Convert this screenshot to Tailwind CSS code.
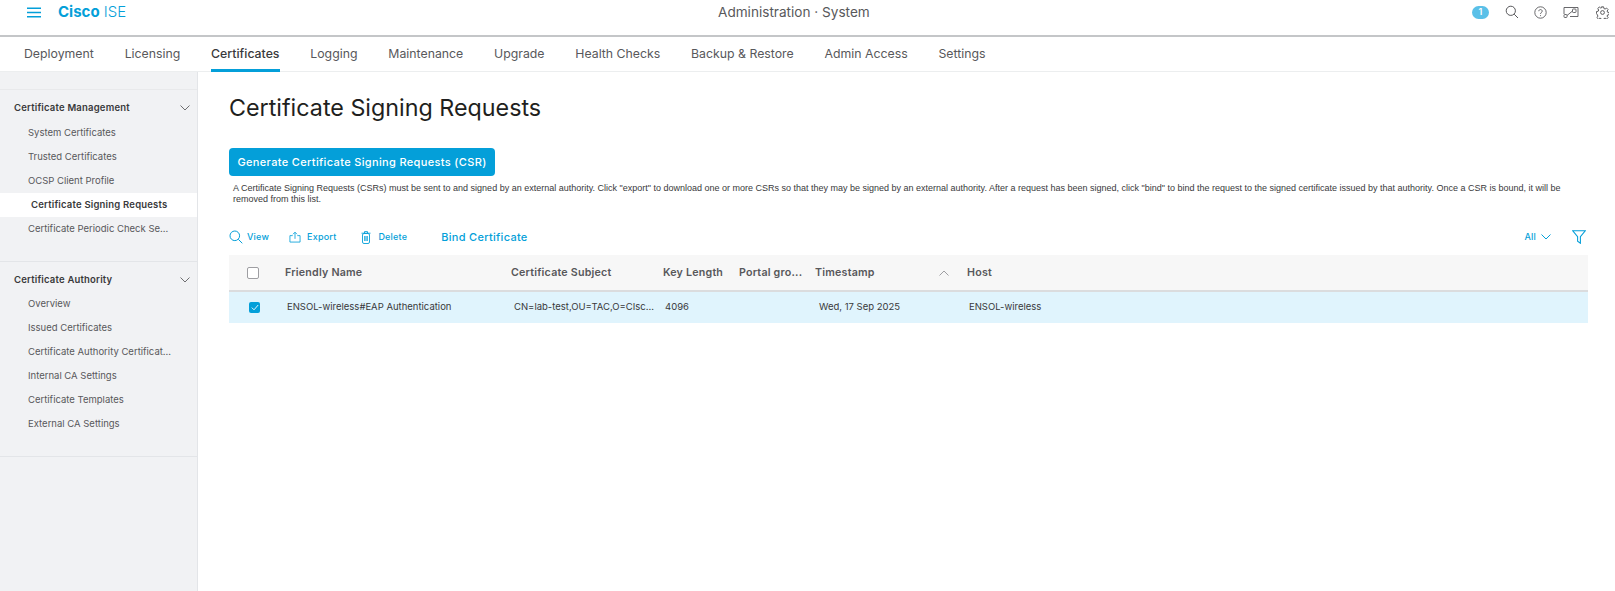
<!DOCTYPE html>
<html lang="en">
  <head>
    <meta charset="UTF-8" />
    <title>Certificate Signing Requests</title>
    <script src="https://cdn.jsdelivr.net/npm/@tailwindcss/browser@4"></script>
  </head>
  <body class="bg-white font-['Inter',sans-serif] text-[#39393b] h-[591px] w-[1615px] overflow-hidden">
    <!-- top bar -->
    <header class="h-[37px] flex items-start border-b-2 border-[#c4c6c8] relative">
      <button class="ml-[26px] mt-[7px] w-[16px]">
        <svg width="16" height="11" viewBox="0 0 16 11" stroke="#049fd9" stroke-width="1.6" fill="none"><path d="M1 1.2h14M1 5.5h14M1 9.8h14" /></svg>
      </button>
      <div class="ml-[16px] mt-[3px] text-[15px] leading-[18px] text-[#049fd9]"><span class="font-bold">Cisco</span> <span class="font-light">ISE</span></div>
      <div class="absolute left-[718px] top-[3px] text-[13.6px] leading-[18px] text-[#58585b]">Administration · System</div>
      <div class="ml-auto flex items-center h-[24px] text-[#58585b]">
        <span class="w-[17px] h-[13px] rounded-full bg-[#5ac0e8] text-white text-[9px] font-semibold flex items-center justify-center">1</span>
        <svg class="ml-[16px]" width="14" height="14" viewBox="0 0 14 14" fill="none" stroke="#58585b" stroke-width="1"><circle cx="5.8" cy="5.8" r="4.6" /><path d="M9.2 9.2L13 13" /></svg>
        <svg class="ml-[15px]" width="13" height="13" viewBox="0 0 13 13" fill="none" stroke="#58585b" stroke-width="0.9"><circle cx="6.5" cy="6.5" r="5.7" /><path d="M4.8 5.2c0-2.2 3.4-2.2 3.4 0 0 1.3-1.7 1.3-1.7 2.8M6.5 9.2v.9" /></svg>
        <svg class="ml-[16px]" width="16" height="12" viewBox="0 0 16 12" fill="none" stroke="#58585b" stroke-width="0.9"><path d="M1 8V1.5h14v9H7" /><rect x="1" y="8.5" width="3" height="3" rx="0.8" /><rect x="9.5" y="3" width="3.5" height="3.5" rx="0.8" /><path d="M4 9.5L9.5 5" /></svg>
        <svg class="ml-[17px] mr-[6px]" width="13" height="13" viewBox="0 0 24 24" fill="none" stroke="#58585b" stroke-width="1.8"><circle cx="12" cy="12" r="3.5" /><path d="M10 1.5h4l.6 3.2 2.2.9 2.7-1.8 2.8 2.8-1.8 2.7.9 2.2 3.1.6v3.8l-3.1.6-.9 2.2 1.8 2.7-2.8 2.8-2.7-1.8-2.2.9-.6 2.6h-4l-.6-2.6-2.2-.9-2.7 1.8-2.8-2.8 1.8-2.7-.9-2.2L1 14v-3.8l3.1-.6.9-2.2-1.8-2.7 2.8-2.8 2.7 1.8 2.2-.9z" /></svg>
      </div>
    </header>

    <!-- tabs -->
    <nav class="h-[35px] flex gap-[30.8px] pl-[24px] text-[12.3px] text-[#58585b] border-b border-[#eceeef]">
      <a class="leading-[34px]">Deployment</a>
      <a class="leading-[34px]">Licensing</a>
      <a class="leading-[34px] h-[35px] border-b-[3px] border-[#049fd9] text-[#39393b] font-medium">Certificates</a>
      <a class="leading-[34px]">Logging</a>
      <a class="leading-[34px]">Maintenance</a>
      <a class="leading-[34px]">Upgrade</a>
      <a class="leading-[34px]">Health Checks</a>
      <a class="leading-[34px]">Backup &amp; Restore</a>
      <a class="leading-[34px]">Admin Access</a>
      <a class="leading-[34px]">Settings</a>
    </nav>

    <div class="flex h-[519px]">
      <!-- sidebar -->
      <aside class="w-[198px] shrink-0 bg-[#f1f2f4] border-r border-[#e3e5e8] text-[9.5px] text-[#58585b]">
        <div class="h-[18px] border-b border-[#e8e9eb]"></div>
        <section class="h-[172px] border-b border-[#e3e5e8] pt-[7px]">
          <div class="h-[24px] pb-[2px] flex items-center justify-between pl-[14px] pr-[7px] font-semibold tracking-[0.2px] text-[#39393b]">
            Certificate Management
            <svg width="10" height="6" viewBox="0 0 10 6" fill="none" stroke="#6e6e70"><path d="M.5 .5L5 5L9.5 .5" /></svg>
          </div>
          <div class="h-[24px] leading-[24px] pl-[28px]">System Certificates</div>
          <div class="h-[24px] leading-[24px] pl-[28px]">Trusted Certificates</div>
          <div class="h-[24px] leading-[24px] pl-[28px]">OCSP Client Profile</div>
          <div class="h-[24px] leading-[24px] pl-[31px] bg-white font-semibold tracking-[0.2px] text-[#39393b]">Certificate Signing Requests</div>
          <div class="h-[24px] leading-[24px] pl-[28px]">Certificate Periodic Check Se...</div>
        </section>
        <section class="h-[195px] border-b border-[#e3e5e8] pt-[6px]">
          <div class="h-[24px] flex items-center justify-between pl-[14px] pr-[7px] font-semibold tracking-[0.2px] text-[#39393b]">
            Certificate Authority
            <svg width="10" height="6" viewBox="0 0 10 6" fill="none" stroke="#6e6e70"><path d="M.5 .5L5 5L9.5 .5" /></svg>
          </div>
          <div class="h-[24px] leading-[24px] pl-[28px]">Overview</div>
          <div class="h-[24px] leading-[24px] pl-[28px]">Issued Certificates</div>
          <div class="h-[24px] leading-[24px] pl-[28px]">Certificate Authority Certificat...</div>
          <div class="h-[24px] leading-[24px] pl-[28px]">Internal CA Settings</div>
          <div class="h-[24px] leading-[24px] pl-[28px]">Certificate Templates</div>
          <div class="h-[24px] leading-[24px] pl-[28px]">External CA Settings</div>
        </section>
      </aside>

      <!-- main -->
      <main class="flex-1 pl-[31px] pr-[27px] min-w-0">
        <h1 class="mt-[20px] text-[23.3px] leading-[32px] text-[#1f1f20]">Certificate Signing Requests</h1>
        <button class="mt-[24px] w-[266px] h-[28px] rounded-[4px] bg-[#049fd9] text-white text-[11px] font-medium tracking-[0.35px]">Generate Certificate Signing Requests (CSR)</button>
        <p class="mt-[7px] pl-[4px] font-['Liberation_Sans',sans-serif] text-[9px] leading-[11px] text-[#39393b]">A Certificate Signing Requests (CSRs) must be sent to and signed by an external authority. Click "export" to download one or more CSRs so that they may be signed by an external authority. After a request has been signed, click "bind" to bind the request to the signed certificate issued by that authority. Once a CSR is bound, it will be removed from this list.</p>

        <div class="mt-[16px] h-[32px] flex items-center text-[#049fd9] text-[9px] font-medium tracking-[0.2px]">
          <svg width="14" height="14" viewBox="0 0 14 14" fill="none" stroke="#049fd9"><circle cx="5.8" cy="5.8" r="4.8" /><path d="M9.3 9.3L13.3 13.3" /></svg>
          <span class="ml-[4px]">View</span>
          <svg class="ml-[20px]" width="12" height="12" viewBox="0 0 13 12" fill="none" stroke="#049fd9" stroke-width="0.9"><path d="M4 4.5H1v7h11v-7H9M6.5 8V1M4.3 3L6.5 .8L8.7 3" /></svg>
          <span class="ml-[6px]">Export</span>
          <svg class="ml-[25px]" width="10" height="13" viewBox="0 0 10 13" fill="none" stroke="#049fd9" stroke-width="0.9"><rect x="1.5" y="2.5" width="7" height="10" rx="1.5" /><path d="M.5 2.2h9M3.5 2V.6h3V2M3.7 5v5M5 5v5M6.3 5v5" /></svg>
          <span class="ml-[7px]">Delete</span>
          <span class="ml-[34px] text-[11px] tracking-[0.3px]">Bind Certificate</span>
          <span class="ml-auto">All</span>
          <svg class="ml-[5px]" width="10" height="6" viewBox="0 0 10 6" fill="none" stroke="#049fd9"><path d="M.5 .5L5 5L9.5 .5" /></svg>
          <svg class="ml-[21px] mr-[2px]" width="14" height="14" viewBox="0 0 13 13" fill="none" stroke="#049fd9"><path d="M.7 .7h11.6L7.8 6.2v6.1L5.2 10.4V6.2z" /></svg>
        </div>

        <!-- table -->
        <div class="mt-[2px] text-[10.7px] tracking-[0.2px]">
          <div class="h-[37px] bg-[#f7f7f7] border-b-2 border-[#dbdcde] flex items-center font-semibold text-[#58585b]">
            <span class="ml-[18px] w-[12px] h-[12px] border border-[#9e9ea2] rounded-[2px] bg-white"></span>
            <span class="ml-[26px] w-[226px] pt-[2px]">Friendly Name</span>
            <span class="w-[152px] pt-[2px]">Certificate Subject</span>
            <span class="w-[76px] pt-[2px]">Key Length</span>
            <span class="w-[76px] pt-[2px]">Portal gro...</span>
            <span class="w-[124px] pt-[2px]">Timestamp</span>
            <svg class="w-[28px]" width="10" height="6" viewBox="0 0 28 6" fill="none" stroke="#9e9ea2"><path d="M.5 5.5L5 1L9.5 5.5" /></svg>
            <span class="pt-[2px]">Host</span>
          </div>
          <div class="h-[31px] bg-[#e0f4fd] flex items-center text-[9.5px] tracking-normal text-[#39393b]">
            <span class="ml-[20px] w-[11px] h-[11px] rounded-[2px] bg-[#049fd9] flex items-center justify-center">
              <svg width="8" height="7" viewBox="0 0 8 7" fill="none" stroke="white" stroke-width="0.9"><path d="M.8 3.6L3 5.8L7.2 1" /></svg>
            </span>
            <span class="ml-[27px] w-[227px]">ENSOL-wireless#EAP Authentication</span>
            <span class="w-[151px]">CN=lab-test,OU=TAC,O=CIsc...</span>
            <span class="w-[154px]">4096</span>
            <span class="w-[150px]">Wed, 17 Sep 2025</span>
            <span>ENSOL-wireless</span>
          </div>
        </div>
      </main>
    </div>
  </body>
</html>
